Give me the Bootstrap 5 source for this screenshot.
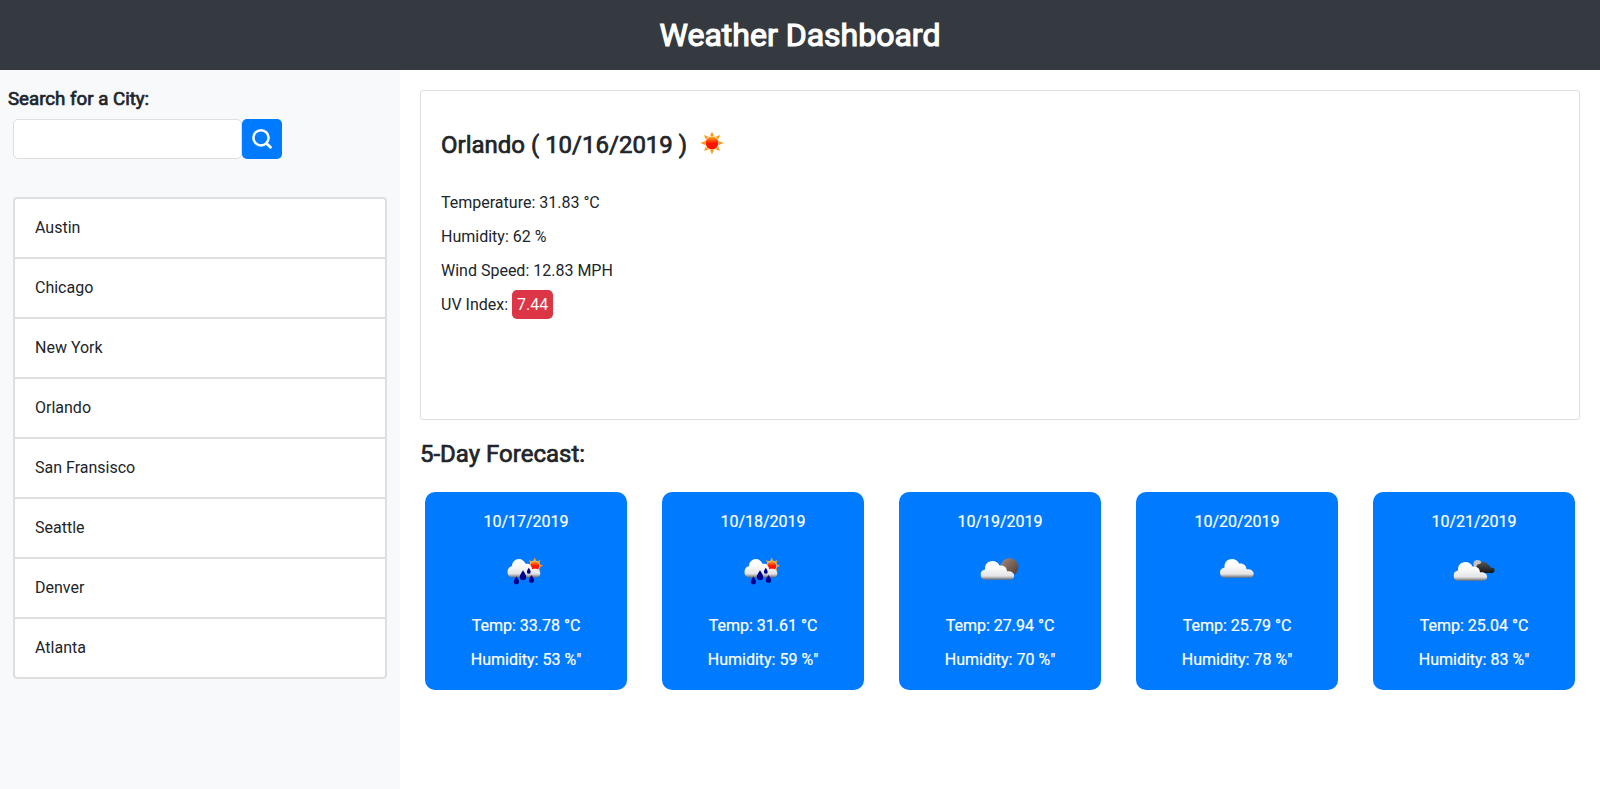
<!DOCTYPE html>
<html lang="en">
<head>
<meta charset="utf-8">
<meta name="viewport" content="width=device-width, initial-scale=1">
<title>Weather Dashboard</title>
<link rel="stylesheet" href="https://cdn.jsdelivr.net/npm/bootstrap@5.3.0/dist/css/bootstrap.min.css">
<style>
  body { font-family: Roboto, sans-serif; color: #212529; line-height: 24px; }
  h1, h2, h3 { font-weight: 400; -webkit-text-stroke: .7px currentColor; line-height: 1.2; }
  .topbar { background: #343a40; height: 70px; }
  .topbar h1 { font-size: 32px; -webkit-text-stroke-width: 1.2px; padding-top: 1px; }
  .sidebar { width: 400px; background: #f8f9fb; padding: 18px 13px 0; }
  .sidebar h2 { font-size: 18.7px; margin: 0 0 9px -5px; }
  .search-box { width: 229px; height: 40px; border-color: #dedfe0; border-radius: 5px; }
  .search-btn { width: 40px; height: 40px; background: #007bff; border-radius: 5px; }
  .cities { margin-top: 38px; border: 2px solid #dedfe0; border-radius: 4px; width: 374px; }
  .cities .list-group-item { height: 60px; padding: 17px 20px; color: #212529; border: 0; border-bottom: 2px solid #dedfe0; }
  .cities .list-group-item:last-child { height: 58px; border-bottom: 0; }
  .content { padding: 20px; }
  .today { height: 330px; border-color: #dedfe0; border-radius: 3px; padding: 40px 20px 0; }
  .today h2 { font-size: 24px; margin: 0 0 31px; height: 29px; }
  .today h2 svg { margin-left: 13px; }
  .today p { margin-bottom: 10px; height: 24px; }
  .uv { display: inline-block; background: #dc3545; color: #fff; border-radius: 5px; padding: 3px 5px 2px; margin: -3px 0 -2px; }
  .outlook h3 { font-size: 24px; margin: 20px 0 0; height: 52px; }
  .days { padding: 0 5px; }
  .day { width: 202px; height: 198px; background: #007bff; color: #fff; border-radius: 10px; padding-top: 18px; text-align: center; border: 0; display: block; }
  .day p { margin: 0 0 10px; -webkit-text-stroke: .2px #fff; }
  .day svg { display: block; margin: 11px auto 19px; }
</style>
</head>
<body>
<svg width="0" height="0" class="position-absolute" aria-hidden="true">
  <defs>
    <linearGradient id="cl" x1="0" y1="0" x2="0" y2="1"><stop offset=".3" stop-color="#fff"/><stop offset=".8" stop-color="#e4e4e6"/><stop offset="1" stop-color="#6c6c70"/></linearGradient>
    <linearGradient id="sn" x1="0" y1="0" x2="0" y2="1"><stop offset="0" stop-color="#ffb020"/><stop offset=".5" stop-color="#ff1800"/><stop offset="1" stop-color="#ff1000"/></linearGradient>
    <linearGradient id="mn" x1="0" y1="0" x2="1" y2="1"><stop offset="0" stop-color="#a28b80"/><stop offset="1" stop-color="#4e392e"/></linearGradient>
    <linearGradient id="dk" x1="0" y1="0" x2="0" y2="1"><stop offset="0" stop-color="#555"/><stop offset="1" stop-color="#161616"/></linearGradient>
    <symbol id="sun" viewBox="-12 -12 24 24">
      <path fill="#fb9b16" d="M0-11.5 2-7H-2ZM0 11.5 2 7H-2ZM-11.5 0-7 2V-2ZM11.5 0 7 2V-2ZM-8-8-3.5-6.3-6.3-3.5ZM8-8 3.5-6.3 6.3-3.5ZM-8 8-3.5 6.3-6.3 3.5ZM8 8 3.5 6.3 6.3 3.5Z"/>
      <circle r="7.2" fill="#fee8b0"/><circle r="6.4" fill="url(#sn)"/>
    </symbol>
    <symbol id="cloud" viewBox="0 0 34 20">
      <path fill="url(#cl)" d="M5 19.3C1.700 19.300 0 16.800 0 14 0 11.300 1.600 9.600 4.500 9 4.200 4 7.200.5 11.800.5c3.400 0 5.900 1.500 7.200 4.600 4-.8 7.200 1.500 7.500 5.600 4.300-.4 7.200 1.500 7.200 4.600 0 2.500-1.900 4-4.700 4z"/>
    </symbol>
    <symbol id="rain" viewBox="0 0 60 50">
      <use href="#sun" x="31" y="12" width="17.500" height="17.500"/>
      <path fill="url(#cl)" d="M18 32.500c-3.600 0-5.500-2.400-5.500-5.500 0-3.300 1.800-5.300 4.600-6-.2-3.700 2.900-6.900 6.700-6.900 3.400 0 5.500 2.100 6.600 4.700 3.400-.8 6.500 1.200 6.700 5.400 4.600-1.500 8.200.8 8.200 4.400 0 2.600-1.800 3.900-4.800 3.900z"/>
      <path fill="#00008f" d="M28 25.300c2.100 3.300 3.200 4.900 3.200 6.600a3.200 3.200 0 0 1-6.400 0c0-1.700 1.100-3.300 3.200-6.600ZM33.800 22.800c1.200 2 1.900 3.100 1.900 4.100a1.900 1.900 0 0 1-3.800 0c0-1 .7-2.100 1.900-4.100ZM21.400 31.500c1.700 2.500 2.600 4 2.600 5.200a2.600 2.600 0 0 1-5.200 0c0-1.200.9-2.700 2.600-5.200ZM36.500 30c1.700 2.500 2.600 4 2.600 5.200a2.600 2.600 0 0 1-5.200 0c0-1.200.9-2.700 2.600-5.200Z"/>
    </symbol>
  </defs>
</svg>
<div class="d-flex flex-column min-vh-100">
  <header class="topbar d-flex align-items-center justify-content-center text-white">
    <h1 class="m-0">Weather Dashboard</h1>
  </header>
  <div class="d-flex flex-grow-1">
    <aside class="sidebar flex-shrink-0">
      <h2>Search for a City:</h2>
      <form class="d-flex">
        <input class="search-box form-control" type="text" aria-label="City">
        <button class="search-btn btn border-0 p-0 d-flex align-items-center justify-content-center" type="button" aria-label="Search">
          <svg width="22" height="22" viewBox="0 0 22 22" fill="none" stroke="#fff" stroke-linecap="round"><circle cx="10" cy="9.800" r="7.600" stroke-width="2.500"/><path d="m16 16 3.500 3.300" stroke-width="2.800"/></svg>
        </button>
      </form>
      <ul class="cities list-group">
        <li class="list-group-item">Austin</li>
        <li class="list-group-item">Chicago</li>
        <li class="list-group-item">New York</li>
        <li class="list-group-item">Orlando</li>
        <li class="list-group-item">San Fransisco</li>
        <li class="list-group-item">Seattle</li>
        <li class="list-group-item">Denver</li>
        <li class="list-group-item">Atlanta</li>
      </ul>
    </aside>
    <main class="content flex-grow-1">
      <section class="today card">
        <h2 class="d-flex">Orlando ( 10/16/2019 )<svg width="24" height="24"><use href="#sun"/></svg></h2>
        <p>Temperature: 31.83 °C</p>
        <p>Humidity: 62 %</p>
        <p>Wind Speed: 12.83 MPH</p>
        <p>UV Index: <span class="uv">7.44</span></p>
      </section>
      <section class="outlook">
        <h3>5-Day Forecast:</h3>
        <div class="days d-flex justify-content-between">
          <div class="day card"><p>10/17/2019</p>
            <svg width="60" height="50"><use href="#rain" x="-1" width="60" height="50"/></svg>
            <p>Temp: 33.78 °C</p><p>Humidity: 53 %"</p></div>
          <div class="day card"><p>10/18/2019</p>
            <svg width="60" height="50"><use href="#rain" x="-1" width="60" height="50"/></svg>
            <p>Temp: 31.61 °C</p><p>Humidity: 59 %"</p></div>
          <div class="day card"><p>10/19/2019</p>
            <svg width="60" height="50"><circle cx="39.500" cy="22" r="9" fill="url(#mn)"/><use href="#cloud" x="10.500" y="15.500" width="34" height="20"/></svg>
            <p>Temp: 27.94 °C</p><p>Humidity: 70 %"</p></div>
          <div class="day card"><p>10/20/2019</p>
            <svg width="60" height="50"><use href="#cloud" x="13" y="13.500" width="34" height="20"/></svg>
            <p>Temp: 25.79 °C</p><p>Humidity: 78 %"</p></div>
          <div class="day card"><p>10/21/2019</p>
            <svg width="60" height="50"><circle cx="33.500" cy="19" r="4" fill="#c9c1bd"/><path fill="url(#dk)" d="M35 28c-3-2-3.500-4-2.500-6.500.7-2 2-2.700 3.500-2.300 1-3 6.500-3 8 .3 1.600.5 2.300 1.600 2.300 3 2.700-.3 4.400.8 4.400 2.700S49 28 47 28z"/><use href="#cloud" x="9.500" y="16.500" width="34" height="20"/></svg>
            <p>Temp: 25.04 °C</p><p>Humidity: 83 %"</p></div>
        </div>
      </section>
    </main>
  </div>
</div>
<script src="https://cdn.jsdelivr.net/npm/bootstrap@5.3.0/dist/js/bootstrap.bundle.min.js"></script>
</body>
</html>
